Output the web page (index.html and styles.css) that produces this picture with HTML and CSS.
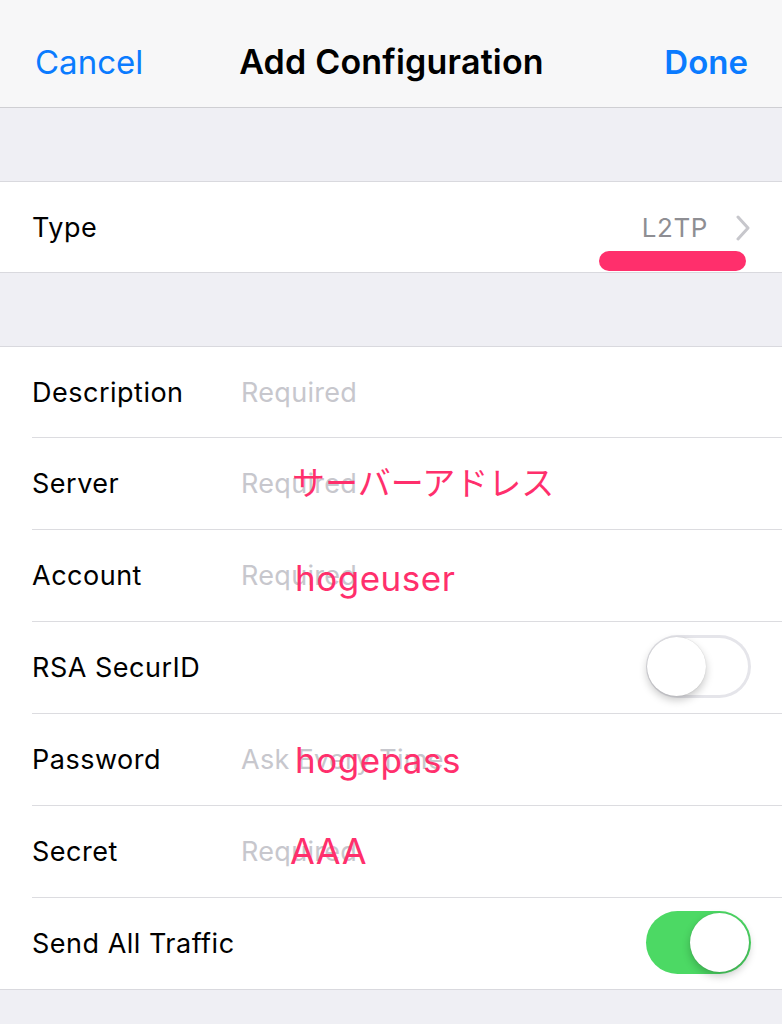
FILE: index.html
```html
<!DOCTYPE html>
<html lang="ja">
<head>
  <meta charset="UTF-8" />
  <meta name="viewport" content="width=device-width, initial-scale=1.0"/>
  <title>Add Configuration</title>
  <link rel="stylesheet" href="styles.css">
</head>
<body>
  <header class="navbar">
    <span class="nav-btn cancel">Cancel</span>
    <span class="nav-title">Add Configuration</span>
    <span class="nav-btn done">Done</span>
  </header>

  <div class="spacer"></div>

  <section class="group">
    <div class="row type-row">
      <span class="label">Type</span>
      <span class="detail">
        L2TP
        <svg class="chevron" width="14" height="26" viewBox="0 0 14 26">
          <path d="M2 2 L12 13 L2 24" fill="none" stroke="#c7c7cc" stroke-width="3" stroke-linecap="round" stroke-linejoin="round"/>
        </svg>
      </span>
      <span class="marker"></span>
    </div>
  </section>

  <div class="spacer"></div>

  <section class="group">
    <div class="row">
      <span class="label">Description</span>
      <span class="value">Required</span>
    </div>
    <div class="row">
      <span class="label">Server</span>
      <span class="value">Required<span class="note note-jp">サーバーアドレス</span></span>
    </div>
    <div class="row">
      <span class="label">Account</span>
      <span class="value">Required<span class="note note-user">hogeuser</span></span>
    </div>
    <div class="row">
      <span class="label">RSA SecurID</span>
      <span class="switch"><span class="knob"></span></span>
    </div>
    <div class="row">
      <span class="label">Password</span>
      <span class="value">Ask Every Time<span class="note note-pass">hogepass</span></span>
    </div>
    <div class="row">
      <span class="label">Secret</span>
      <span class="value">Required<span class="note note-aaa">AAA</span></span>
    </div>
    <div class="row">
      <span class="label">Send All Traffic</span>
      <span class="switch on"><span class="knob"></span></span>
    </div>
  </section>
</body>
</html>
```

FILE: styles.css
```css
body {
  margin: 0;
  background-color: #efeff4;
  font-family: Inter, "Liberation Sans", "Noto Sans CJK JP", sans-serif;
  color: #000;
}

.navbar {
  height: 107px;
  background-color: #f7f7f8;
  border-bottom: 1px solid #cfcfd3;
  display: grid;
  grid-template-columns: 1fr auto 1fr;
  align-items: center;
  padding: 0 34px 0 35px;
}
.nav-btn {
  font-size: 33px;
  color: #0a7bff;
  padding-top: 16px;
}
.done {
  justify-self: end;
  font-weight: 600;
}
.nav-title {
  font-size: 34px;
  font-weight: 600;
  letter-spacing: 0.2px;
  padding-top: 16px;
}

.spacer {
  height: 73px;
}

.group {
  background-color: #fff;
  border-top: 1px solid #d9d9de;
  border-bottom: 1px solid #d9d9de;
}

.row {
  position: relative;
  display: flex;
  align-items: center;
  height: 91px;
  margin-left: 32px;
  padding-right: 32px;
  border-bottom: 1px solid #dcdce0;
}
.row:first-child {
  height: 90px;
}
.row:last-child {
  border-bottom: none;
}

.label {
  width: 209px;
  flex-shrink: 0;
  font-size: 27px;
  letter-spacing: 0.5px;
}

.value {
  position: relative;
  font-size: 27px;
  letter-spacing: 0.3px;
  color: #c7c7cd;
}

.detail {
  margin-left: auto;
  display: flex;
  align-items: center;
  gap: 28px;
  font-size: 26px;
  letter-spacing: 0.6px;
  color: #8e8e93;
}
.chevron {
  margin-top: 1px;
}

.marker {
  position: absolute;
  top: 69px;
  right: 36px;
  width: 147px;
  height: 20px;
  border-radius: 10px;
  background-color: #ff2f6c;
}

.note {
  position: absolute;
  left: 52px;
  white-space: nowrap;
  font-size: 35px;
  letter-spacing: 0.5px;
  color: #ff2f6c;
}
.note-jp {
  left: 51px;
  top: -10px;
  font-family: "Noto Sans CJK JP", sans-serif;
  font-size: 33px;
  letter-spacing: 0;
}
.note-user {
  left: 54px;
  top: -2px;
}
.note-pass {
  left: 54px;
  top: -4px;
}
.note-aaa {
  left: 49px;
  top: -6px;
  font-size: 36px;
}

.switch {
  position: relative;
  margin-left: auto;
  margin-top: -3px;
  margin-right: -1px;
  width: 105px;
  height: 63px;
  border-radius: 32px;
  background-color: #fff;
  box-shadow: inset 0 0 0 3px #e5e5ea;
}
.switch .knob {
  position: absolute;
  top: 2px;
  left: 1px;
  width: 59px;
  height: 59px;
  border-radius: 50%;
  background-color: #fff;
  box-shadow: 0 4px 8px rgba(0, 0, 0, 0.22), 0 0 1px rgba(0, 0, 0, 0.2);
}
.switch.on {
  background-color: #4cd964;
  box-shadow: none;
}
.switch.on .knob {
  left: auto;
  right: 2px;
}
```
